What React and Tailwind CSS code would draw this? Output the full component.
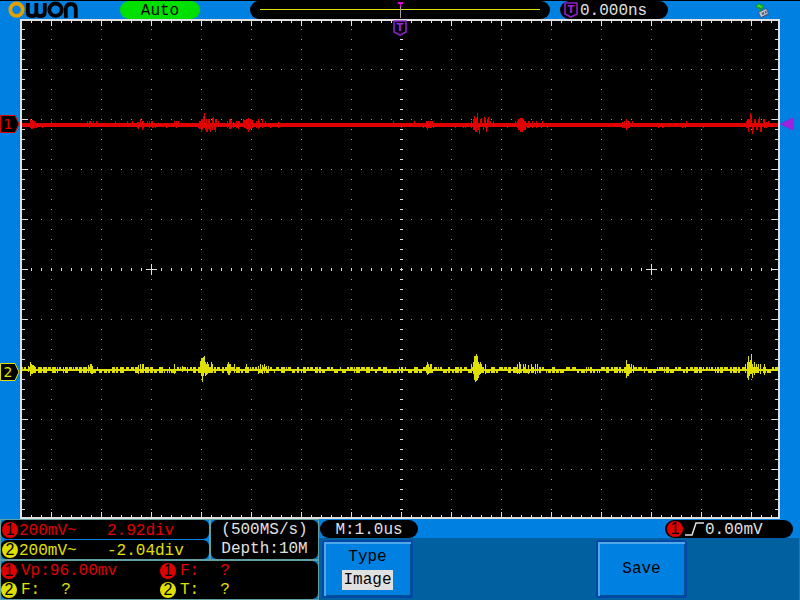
import clsx from "clsx";

const range = (from, to, step) => {
  const out = [];
  for (let v = from; v <= to; v += step) out.push(v);
  return out;
};

// [x, top, bottom] spikes, in plot pixels
const CH1_SPIKES = [
  [8, 98, 107], [9, 100, 108], [10, 99, 108], [11, 100, 107], [12, 100, 107], [14, 102, 107],
  [20, 102, 107], [29, 100, 105], [65, 100, 105], [67, 100, 107], [68, 100, 106], [71, 100, 105],
  [74, 100, 105], [93, 100, 105], [105, 100, 105], [110, 100, 105], [115, 101, 107], [116, 101, 108],
  [118, 98, 106], [120, 100, 109], [121, 100, 107], [125, 100, 106], [127, 100, 107], [129, 100, 106],
  [130, 100, 107], [133, 102, 107], [144, 102, 107], [152, 100, 105], [154, 100, 107], [156, 100, 105],
  [176, 102, 107], [177, 100, 108], [178, 100, 108], [179, 98, 111], [180, 98, 109], [181, 95, 106],
  [182, 92, 107], [183, 102, 109], [184, 98, 111], [185, 102, 111], [186, 98, 108], [187, 98, 109],
  [188, 102, 111], [190, 97, 109], [191, 96, 106], [192, 102, 109], [193, 98, 111], [194, 98, 106],
  [196, 100, 106], [205, 100, 107], [207, 98, 108], [208, 98, 108], [209, 100, 107], [211, 101, 107],
  [214, 100, 107], [216, 100, 108], [217, 100, 106], [221, 98, 106], [222, 99, 107], [223, 99, 107],
  [224, 98, 108], [225, 98, 109], [226, 97, 111], [227, 98, 109], [228, 98, 108], [229, 98, 108],
  [230, 99, 107], [234, 100, 107], [236, 98, 108], [237, 100, 107], [240, 98, 107], [243, 100, 106],
  [248, 102, 107], [256, 101, 107], [371, 100, 105], [379, 102, 107], [392, 100, 105], [401, 102, 107],
  [404, 100, 107], [405, 100, 109], [406, 100, 107], [408, 100, 107], [409, 100, 107], [410, 100, 106],
  [411, 102, 107], [433, 102, 107], [441, 102, 107], [443, 102, 107], [449, 100, 107], [451, 98, 109],
  [452, 95, 109], [453, 98, 111], [454, 97, 111], [455, 92, 107], [456, 102, 109], [457, 102, 113],
  [458, 98, 106], [459, 97, 106], [461, 102, 109], [462, 96, 106], [463, 97, 107], [464, 102, 111],
  [465, 98, 107], [466, 96, 106], [468, 100, 105], [471, 100, 105], [485, 102, 107], [493, 100, 105],
  [495, 100, 107], [496, 98, 109], [497, 98, 109], [498, 97, 111], [499, 97, 111], [500, 97, 111],
  [501, 98, 109], [502, 100, 109], [503, 100, 109], [505, 102, 107], [506, 100, 107], [507, 100, 107],
  [510, 100, 107], [514, 100, 107], [519, 102, 107], [520, 100, 105], [525, 102, 107], [600, 101, 107],
  [602, 100, 107], [604, 98, 109], [605, 100, 107], [606, 100, 107], [607, 100, 107], [610, 100, 105],
  [636, 102, 107], [640, 102, 107], [660, 102, 107], [663, 102, 107], [664, 100, 105], [681, 102, 107],
  [724, 100, 107], [725, 98, 107], [726, 98, 111], [727, 99, 106], [728, 92, 106], [729, 94, 106],
  [730, 102, 113], [731, 102, 109], [732, 98, 106], [733, 98, 105], [734, 104, 109], [735, 102, 109],
  [736, 98, 106], [737, 96, 105], [738, 102, 111], [739, 102, 111], [741, 98, 105], [742, 98, 107],
  [744, 101, 107], [746, 100, 105],
];

const CH2_SPIKES = [
  [6, 345, 351], [8, 341, 355], [9, 343, 353], [10, 344, 353], [11, 344, 352], [12, 345, 351],
  [66, 344, 352], [68, 343, 352], [69, 343, 353], [70, 345, 353], [116, 344, 353], [118, 343, 352],
  [120, 343, 352], [121, 343, 351], [152, 343, 353], [160, 345, 351], [178, 340, 352], [179, 337, 355],
  [180, 337, 361], [181, 336, 355], [182, 335, 352], [183, 341, 355], [184, 343, 354], [185, 341, 353],
  [186, 343, 352], [189, 341, 351], [190, 343, 352], [205, 343, 352], [206, 341, 354], [207, 343, 354],
  [208, 343, 352], [212, 343, 352], [224, 343, 352], [236, 345, 353], [238, 343, 352], [240, 344, 353],
  [242, 343, 352], [244, 345, 352], [246, 345, 352], [404, 344, 352], [405, 341, 354], [406, 343, 353],
  [408, 343, 352], [409, 343, 352], [449, 343, 352], [451, 341, 353], [452, 335, 359], [453, 335, 361],
  [454, 333, 360], [455, 335, 359], [456, 341, 357], [457, 343, 354], [458, 341, 353], [459, 343, 352],
  [463, 343, 353], [495, 343, 353], [497, 341, 353], [498, 343, 352], [501, 343, 352], [503, 343, 352],
  [506, 344, 353], [509, 343, 352], [513, 343, 353], [515, 343, 352], [604, 339, 357], [605, 343, 355],
  [606, 343, 355], [607, 343, 353], [609, 343, 352], [611, 344, 352], [723, 343, 352], [725, 341, 357],
  [726, 335, 359], [727, 341, 355], [728, 339, 353], [729, 333, 353], [730, 343, 357], [732, 341, 354],
  [734, 343, 352], [736, 343, 351], [738, 343, 353], [742, 343, 354],
];

// idle noise riding on channel 2
const noise = () => {
  let seed = 77;
  const rand = () => {
    seed = (seed * 16807) % 2147483647;
    return seed / 2147483647;
  };
  const out = [];
  let x = 0;
  while (x < 755) {
    const run = 1 + Math.floor(rand() * 4);
    const side = rand();
    for (let i = 0; i < run && x + i < 756; i++) {
      out.push([x + i, side < 0.7 ? 346 : 348, side > 0.35 ? 352 : 350]);
    }
    x += run + (rand() < 0.7 ? 1 : 2);
  }
  return out;
};

const toPath = (spikes) =>
  spikes.map(([x, top, bottom]) => `M${x} ${top}h1V${bottom}h-1z`).join("");

const MINOR_X = range(9, 749, 10);
const MAJOR_X = range(29, 729, 50);
const MINOR_Y = range(8, 488, 10);
const MAJOR_Y = range(48, 448, 50);

const gridDots = () => {
  let d = "";
  MAJOR_X.forEach((x) => MINOR_Y.forEach((y) => (d += `M${x} ${y}h1v1h-1z`)));
  MAJOR_Y.forEach((y) => MINOR_X.forEach((x) => (d += `M${x} ${y}h1v1h-1z`)));
  return d;
};

const axisTicks = () => {
  let d = "";
  MINOR_X.forEach((x) => {
    const len = x % 50 === 29 ? 5 : 2;
    d += `M${x} 0h1v${len}h-1zM${x} ${496 - len}h1v${len}h-1zM${x} 247h1v3h-1z`;
  });
  MINOR_Y.forEach((y) => {
    const len = y % 50 === 48 ? 6 : 3;
    d += `M0 ${y}h${len}v1h-${len}zM${756 - len} ${y}h${len}v1h-${len}zM378 ${y}h3v1h-3z`;
  });
  // cross marks
  [129, 629].forEach((x) => {
    d += `M${x - 5} 248h11v1h-11zM${x} 243h1v11h-1z`;
  });
  return d;
};

const Plot = () => (
  <svg
    viewBox="0 0 756 496"
    preserveAspectRatio="none"
    shapeRendering="crispEdges"
    className="block w-full h-[496px]"
    role="img"
    aria-label="Waveforms of channel 1 and channel 2"
  >
    <path d={gridDots()} fill="#a0a0a0" />
    <path d={axisTicks()} fill="#e0e0e0" />
    <path d={"M0 102h756v4H0z" + toPath(CH1_SPIKES)} fill="#e00000" />
    <path d={"M0 348h756v2H0z" + toPath(noise()) + toPath(CH2_SPIKES)} fill="#e0e000" />
  </svg>
);

const Logo = () => (
  <svg viewBox="0 0 70 18" className="w-[70px] h-[18px]" fill="none" strokeWidth="3.8" role="img" aria-label="OWON">
    <circle cx="8.5" cy="8.7" r="6.2" stroke="#e0a000" />
    <g stroke="#000">
      <path d="M19.8 2v9q0 4 3.700 4h1.500q3.300 0 3.300-4V2v9q0 4 3.300 4h1.500q3.700 0 3.700-4V2" />
      <circle cx="47.5" cy="8.7" r="6.2" />
      <path d="M57.800 17V8.500q0-5.500 5-5.500t5 5.500V17" />
    </g>
  </svg>
);

const TriggerShield = ({ className }) => (
  <svg viewBox="0 0 14 16" className={clsx("w-[14px] h-[16px] shrink-0", className)}>
    <path d="M1 1h12v11l-3 1.500-3 1.500-3-1.500L1 12z" fill="#000" stroke="#8a1fc8" strokeWidth="1.6" />
    <text x="7" y="11" textAnchor="middle" fill="#a020e0" className="font-['DejaVu_Sans'] text-[10px] font-bold">
      T
    </text>
  </svg>
);

const UsbIcon = () => (
  <svg viewBox="0 0 14 16" className="w-[14px] h-[16px]">
    <path d="M3 10.500L11 6l3 6.500-8 3.500z" fill="#48506c" />
    <path d="M4 10.500L11 7l2 4.500-7 3.500z" fill="#c0c4cc" />
    <path d="M6.500 11l2-1 1 2-2 1zM9.500 9.500l1.500-.5 1 2-1.500.5z" fill="#50586c" />
    <path d="M0 5l4-4.500L5 2l4 1v4L7 6.500 6 10 3 6z" fill="#109830" />
    <path d="M1.500 5L4 2l1 1.500 3 .5-2 2-2-1z" fill="#40e020" />
  </svg>
);

const ChannelBadge = ({ channel }) => (
  <span
    className={clsx(
      "flex size-4 shrink-0 items-center justify-center rounded-full font-['Liberation_Sans'] text-base leading-4 text-black",
      channel === 1 ? "bg-[#e00000]" : "bg-[#e0e000]"
    )}
  >
    {channel}
  </span>
);

const ChannelMarker = ({ channel, color, className }) => (
  <svg viewBox="0 0 20 18" className={clsx("absolute left-0 w-5 h-[18px]", className)}>
    <path d="M.5.5h14.500l4 8.500-4 8.500H.5z" fill="#000" stroke={color} />
    <text x="8" y="14" textAnchor="middle" fill={color} className="font-['DejaVu_Sans'] text-sm">
      {channel}
    </text>
  </svg>
);

const ChannelRow = ({ channel, scale, offset }) => (
  <div
    className={clsx(
      "grid h-[19px] grid-cols-[17px_88px_1fr] items-center rounded-md bg-black pl-px whitespace-pre",
      channel === 1 ? "text-[#e00000]" : "text-[#e0e000]"
    )}
  >
    <ChannelBadge channel={channel} />
    <span className="pt-0.5">{scale}</span>
    <span className="pt-0.5">{offset}</span>
  </div>
);

const Measure = ({ channel, name, value, spaced }) => (
  <div className={clsx("flex h-[19px] items-center gap-1", channel === 1 ? "text-[#e00000]" : "text-[#e0e000]")}>
    <ChannelBadge channel={channel} />
    <span className={clsx("flex", spaced && "gap-[21px]")}>
      <span>{name}:</span>
      <span>{value}</span>
    </span>
  </div>
);

const MenuButton = ({ children }) => (
  <button
    type="button"
    className="flex h-[58px] w-[91px] flex-col items-center justify-center gap-1 rounded-xs border-2 border-[#0048a8] bg-[#0080e0] text-black shadow-[inset_2px_2px_0_#50a8e8,inset_-1px_-1px_0_#005090]"
  >
    {children}
  </button>
);

export default function App() {
  return (
    <main className="bg-[#0080e0] font-['Liberation_Mono',monospace] text-base leading-[18px] text-[#e0e0e0]">
      <header className="flex h-[19px] items-start border-t border-black pl-2">
        <Logo />
        <div className="ml-[42px] h-[18px] w-20 rounded-full bg-[#00e000] pt-px text-center text-black">Auto</div>
        <div className="ml-[50px] flex h-[18px] flex-1 items-center rounded-full bg-black px-[10px]">
          <svg viewBox="0 0 280 18" preserveAspectRatio="none" shapeRendering="crispEdges" className="h-[18px] w-full">
            <path d="M0 8h281v1H0z" fill="#e0e000" />
            <path d="M140 6h1v11h-1z" fill="#a0a0a0" />
            <path d="M138 1h5v2h-5zM140 3h1v3h-1z" fill="#e000e0" />
          </svg>
        </div>
        <div className="ml-[10px] flex h-[18px] w-[108px] items-center rounded-full bg-black pl-1">
          <TriggerShield />
          <span className="pl-0.5 pt-0.5">0.000ns</span>
        </div>
        <div className="mr-[31px] ml-[87px] pt-px">
          <UsbIcon />
        </div>
      </header>

      <section className="flex">
        <div className="relative w-5">
          <ChannelMarker channel={1} color="#e00000" className="top-[96px]" />
          <ChannelMarker channel={2} color="#e0e000" className="top-[344px]" />
        </div>
        <div className="relative flex-1 border-2 border-[#e0e0e0] bg-black">
          <Plot />
          <TriggerShield className="absolute -top-px left-1/2 -translate-x-1/2" />
        </div>
        <div className="relative w-5">
          <svg viewBox="0 0 14 14" className="absolute top-[98px] left-0 size-[14px]">
            <path d="M0 7L13.500.5v13z" fill="#a020e0" stroke="#6040e0" strokeWidth=".6" />
          </svg>
        </div>
      </section>

      <footer className="flex">
        <div className="flex w-[319px] flex-col gap-0.5 border border-b-2 border-[#60a0a0] bg-[#60a0a0]">
          <div className="flex gap-0.5">
            <div className="flex w-[208px] flex-col gap-px bg-[#0080e0]">
              <ChannelRow channel={1} scale="200mV~" offset="2.92div" />
              <ChannelRow channel={2} scale="200mV~" offset="-2.04div" />
            </div>
            <div className="flex-1 bg-[#0080e0]">
              <div className="flex h-full flex-col items-center justify-around rounded-md bg-black">
                <span>(500MS/s)</span>
                <span>Depth:10M</span>
              </div>
            </div>
          </div>
          <div className="bg-[#0080e0]">
            <div className="grid grid-cols-[159px_1fr] rounded-md bg-black">
              <Measure channel={1} name="Vp" value="96.00mv" />
              <Measure channel={1} name="F" value="?" spaced />
              <Measure channel={2} name="F" value="?" spaced />
              <Measure channel={2} name="T" value="?" spaced />
            </div>
          </div>
        </div>

        <div className="flex flex-1 flex-col">
          <div className="flex h-[19px] items-center justify-between pr-[7px] pl-px">
            <div className="h-[18px] w-[98px] rounded-full bg-black pt-px text-center">M:1.0us</div>
            <div className="flex h-[18px] w-32 items-center rounded-full bg-black pl-0.5">
              <ChannelBadge channel={1} />
              <svg viewBox="0 0 22 16" className="h-4 w-[22px]" fill="none" stroke="#e0e0e0" strokeWidth="1.5">
                <path d="M2 14h7l4-12h8" />
              </svg>
              <span className="pt-0.5">0.00mV</span>
            </div>
          </div>
          <div className="mr-px flex flex-1 items-center justify-between border-b border-[#0080e0] bg-[#0060a0] pr-[112px] pl-[3px]">
            <MenuButton>
              <span>Type</span>
              <span className="bg-[#e0e0e0] px-px leading-5">Image</span>
            </MenuButton>
            <MenuButton>Save</MenuButton>
          </div>
        </div>
      </footer>
    </main>
  );
}
